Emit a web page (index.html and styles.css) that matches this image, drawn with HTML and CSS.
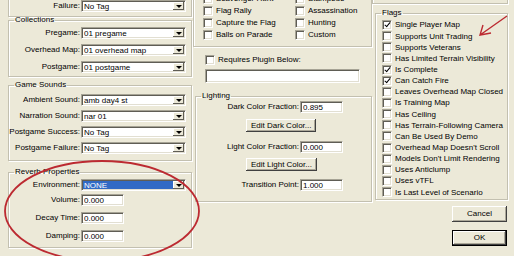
FILE: index.html
```html
<!DOCTYPE html>
<html lang="en">
<head>
    <meta charset="UTF-8">
    <title>Scenario Properties</title>
    <link rel="stylesheet" href="styles.css">
</head>
<body>

<div class="dialog">

    <!-- left column -->
    <div class="col col-left">
        <div class="group cut failure">
            <div class="rows">
                <span class="lbl">Failure:</span>
                <span class="combo"><span class="val">No Tag</span><span class="drop"></span></span>
            </div>
        </div>

        <fieldset class="group collections">
            <legend>Collections</legend>
            <div class="rows">
                <span class="lbl">Pregame:</span>
                <span class="combo"><span class="val">01 pregame</span><span class="drop"></span></span>
                <span class="lbl">Overhead Map:</span>
                <span class="combo"><span class="val">01 overhead map</span><span class="drop"></span></span>
                <span class="lbl">Postgame:</span>
                <span class="combo"><span class="val">01 postgame</span><span class="drop"></span></span>
            </div>
        </fieldset>

        <fieldset class="group sounds">
            <legend>Game Sounds</legend>
            <div class="rows">
                <span class="lbl">Ambient Sound:</span>
                <span class="combo"><span class="val">amb day4 st</span><span class="drop"></span></span>
                <span class="lbl">Narration Sound:</span>
                <span class="combo"><span class="val">nar 01</span><span class="drop"></span></span>
                <span class="lbl">Postgame Success:</span>
                <span class="combo"><span class="val">No Tag</span><span class="drop"></span></span>
                <span class="lbl">Postgame Failure:</span>
                <span class="combo"><span class="val">No Tag</span><span class="drop"></span></span>
            </div>
        </fieldset>

        <fieldset class="group reverb">
            <legend>Reverb Properties</legend>
            <div class="rows">
                <span class="lbl">Environment:</span>
                <span class="combo"><span class="val selected">NONE</span><span class="drop"></span></span>
                <span class="lbl">Volume:</span>
                <input class="field short" type="text" value="0.000">
                <span class="lbl">Decay Time:</span>
                <input class="field short" type="text" value="0.000">
                <span class="lbl">Damping:</span>
                <input class="field short" type="text" value="0.000">
            </div>
        </fieldset>
    </div>

    <!-- middle column -->
    <div class="col col-mid">
        <div class="group cut game-types">
            <div class="checks two">
                <span class="chk"><span class="box"></span>Scavenger Hunt</span>
                <span class="chk"><span class="box"></span>Stampede</span>
                <span class="chk"><span class="box"></span>Flag Rally</span>
                <span class="chk"><span class="box"></span>Assassination</span>
                <span class="chk"><span class="box"></span>Capture the Flag</span>
                <span class="chk"><span class="box"></span>Hunting</span>
                <span class="chk"><span class="box"></span>Balls on Parade</span>
                <span class="chk"><span class="box"></span>Custom</span>
            </div>
        </div>

        <div class="plugin">
            <span class="chk"><span class="box"></span>Requires Plugin Below:</span>
            <input class="field wide" type="text" value="">
        </div>

        <fieldset class="group lighting">
            <legend>Lighting</legend>
            <div class="light-row">
                <span class="lbl">Dark Color Fraction:</span>
                <input class="field short" type="text" value="0.895">
            </div>
            <button class="btn edit">Edit Dark Color...</button>
            <div class="light-row">
                <span class="lbl">Light Color Fraction:</span>
                <input class="field short" type="text" value="0.000">
            </div>
            <button class="btn edit">Edit Light Color...</button>
            <div class="light-row">
                <span class="lbl">Transition Point:</span>
                <input class="field short" type="text" value="1.000">
            </div>
        </fieldset>
    </div>

    <!-- right column -->
    <div class="col col-right">
        <div class="group cut top-right"></div>

        <fieldset class="group flags">
            <legend>Flags</legend>
            <div class="checks">
                <span class="chk"><span class="box on"></span>Single Player Map</span>
                <span class="chk"><span class="box"></span>Supports Unit Trading</span>
                <span class="chk"><span class="box"></span>Supports Veterans</span>
                <span class="chk"><span class="box"></span>Has Limited Terrain Visibility</span>
                <span class="chk"><span class="box on"></span>Is Complete</span>
                <span class="chk"><span class="box on"></span>Can Catch Fire</span>
                <span class="chk"><span class="box"></span>Leaves Overhead Map Closed</span>
                <span class="chk"><span class="box"></span>Is Training Map</span>
                <span class="chk"><span class="box"></span>Has Ceiling</span>
                <span class="chk"><span class="box"></span>Has Terrain-Following Camera</span>
                <span class="chk"><span class="box"></span>Can Be Used By Demo</span>
                <span class="chk"><span class="box"></span>Overhead Map Doesn't Scroll</span>
                <span class="chk"><span class="box"></span>Models Don't Limit Rendering</span>
                <span class="chk"><span class="box"></span>Uses Anticlump</span>
                <span class="chk"><span class="box"></span>Uses vTFL</span>
                <span class="chk"><span class="box"></span>Is Last Level of Scenario</span>
            </div>
        </fieldset>

        <div class="actions">
            <button class="btn">Cancel</button>
            <button class="btn default">OK</button>
        </div>
    </div>
</div>

<!-- red marks drawn over the screenshot -->
<svg class="marks" width="514" height="256" viewBox="0 0 514 256">
    <ellipse cx="102" cy="211" rx="97" ry="50" fill="none" stroke="#bc2a31" stroke-width="1.8"/>
    <path d="M507 16 L480 35 M483 25 L480 35 L491 33" fill="none" stroke="#bc2a31" stroke-width="1.4"/>
</svg>

</body>
</html>
```

FILE: styles.css
```css
body {
    margin: 0;
    background: #ece9d8;
    font-family: "Liberation Sans", Arial, sans-serif;
    font-size: 8px;
    color: #000;
    width: 514px;
    height: 256px;
    overflow: hidden;
    position: relative;
}

.dialog {
    display: flex;
    margin-top: -10px;
    padding-left: 8px;
}

.col {
    display: flex;
    flex-direction: column;
}

.col-left {
    width: 184px;
}

.col-mid {
    width: 179px;
    margin-left: 1px;
}

.col-right {
    width: 133px;
    margin-left: 3px;
}

/* group boxes */
.group {
    margin: 0;
    padding: 0;
    border: 1px solid #c3c0b0;
    box-shadow: inset 1px 1px #fff, 1px 1px #fff;
    min-width: 0;
}

.group.cut {
    border-top: none;
}

legend {
    margin-left: 5px;
    padding: 0 1px;
    line-height: 6px;
}

/* label + control rows */
.rows {
    display: grid;
    grid-template-columns: 71px 105px;
    column-gap: 1px;
    grid-auto-rows: 12px;
    padding-right: 5px;
}

.lbl {
    text-align: right;
    line-height: 12px;
    white-space: nowrap;
}

.failure .rows {
    padding-top: 10px;
    padding-bottom: 4px;
}

.collections .rows {
    row-gap: 5px;
    padding-top: 4px;
    padding-bottom: 3px;
}

.sounds {
    margin-top: 5px;
}

.sounds .rows {
    row-gap: 4px;
    padding-top: 6px;
    padding-bottom: 6px;
}

.reverb {
    margin-top: 8px;
}

.reverb .rows {
    grid-template-rows: 15px 18px 18px 12px;
    padding-top: 4px;
    padding-bottom: 5px;
}

/* sunken controls */
.combo, .field, .box {
    box-sizing: border-box;
    background: #fff;
    border: 1px solid;
    border-color: #a6a395 #fff #fff #a6a395;
    box-shadow: inset 1px 1px #5f5d55, inset -1px -1px #e2dfd2;
}

.combo {
    display: flex;
    height: 12px;
    padding: 1px;
}

.val {
    flex: 1;
    line-height: 10px;
    padding-left: 1px;
    white-space: nowrap;
}

.val.selected {
    background: #316ac5;
    color: #fff;
}

.drop {
    width: 11px;
    background: #ece9d8;
    box-shadow: inset -1px -1px #5f5d55, inset 1px 1px #fff;
    display: flex;
    align-items: center;
    justify-content: center;
}

.drop::after {
    content: "";
    border-left: 3px solid transparent;
    border-right: 3px solid transparent;
    border-top: 3px solid #000;
}

.field {
    height: 12px;
    padding: 0 0 0 2px;
    margin: 0;
    font: inherit;
    line-height: 10px;
    color: #000;
    outline: none;
}

.field.short {
    width: 43px;
}

/* checkboxes */
.checks {
    display: grid;
    grid-auto-rows: 11.15px;
}

.checks.two {
    grid-template-columns: 92px 1fr;
    grid-auto-rows: 12px;
}

.chk {
    display: flex;
    align-items: center;
    white-space: nowrap;
}

.box {
    width: 10px;
    height: 10px;
    flex: none;
    margin-right: 3px;
    position: relative;
}

.box.on::after {
    content: "";
    position: absolute;
    left: 2.5px;
    top: 0.5px;
    width: 2px;
    height: 5px;
    border-right: 1.6px solid #000;
    border-bottom: 1.6px solid #000;
    transform: rotate(40deg);
}

.game-types .checks {
    padding: 2.5px 0 5.5px 9px;
}

.plugin {
    display: flex;
    flex-direction: column;
    align-items: flex-start;
    padding: 7px 0 0 12px;
}

.plugin .chk {
    height: 11px;
}

.field.wide {
    width: 155px;
    height: 14px;
    margin-top: 4px;
}

/* lighting */
.lighting {
    margin-top: 10px;
    margin-left: 2px;
    padding-top: 2px;
    padding-bottom: 10px;
}

.light-row {
    display: flex;
    align-items: center;
    height: 12px;
}

.light-row .lbl {
    width: 103px;
    margin-right: 1px;
}

.btn {
    font: inherit;
    color: #000;
    background: #ece9d8;
    border: none;
    padding: 0 5px;
    box-shadow: inset -1px -1px #404040, inset 1px 1px #fff, inset -2px -2px #aca899;
}

.btn.edit {
    align-self: flex-start;
    height: 13px;
    line-height: 12px;
    margin: 6px 0 9px 50px;
}

.lighting .btn.edit:last-of-type {
    margin-top: 5px;
    margin-bottom: 8px;
}

/* right column */
.top-right {
    height: 13px;
    margin-left: -3px;
}

.flags {
    margin-top: 6px;
    padding: 3.4px 0 1px 6px;
}

.flags legend {
    margin-left: -1px;
}

.actions {
    display: flex;
    flex-direction: column;
    align-items: flex-end;
    gap: 8px;
    margin-top: 6px;
    margin-right: 1px;
}

.actions .btn {
    width: 55px;
    height: 16px;
}

.btn.default {
    border: 1px solid #000;
}

.marks {
    position: absolute;
    left: 0;
    top: 0;
    pointer-events: none;
}
```
